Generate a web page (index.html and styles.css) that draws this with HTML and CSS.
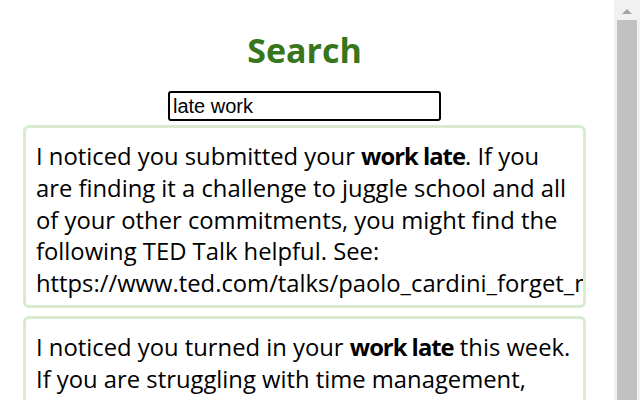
FILE: index.html
```html
<!DOCTYPE html>
<html>
<head>
<meta charset="utf-8">
<link rel="stylesheet" href="styles.css">
</head>
<body>
<div class="page">
  <main class="content">
    <h1 class="title">Search</h1>
    <div class="search-row">
      <input class="search" type="text" value="late work">
    </div>
    <div class="card">
      <p class="card-text">I noticed you submitted your <b>work late</b>. If you are finding it a challenge to juggle school and all of your other commitments, you might find the following TED Talk helpful. See: <span class="nowrap">https://www.ted.com/talks/paolo_cardini_forget_multitasking_try_monotasking</span></p>
    </div>
    <div class="card">
      <p class="card-text">I noticed you turned in your <b>work late</b> this week. If you are struggling with time management, consider using a planner to organize your assignments and deadlines.</p>
    </div>
  </main>
  <div class="scrollbar">
    <div class="scroll-arrow"></div>
    <div class="scroll-thumb"></div>
  </div>
</div>
</body>
</html>
```
FILE: styles.css
```css
html, body {
  margin: 0;
  padding: 0;
  height: 100%;
  overflow: hidden;
  background: #ffffff;
}
.page {
  display: flex;
  height: 400px;
  font-family: "Open Sans", "Noto Sans", sans-serif;
}
.content {
  flex: 1;
  min-width: 0;
  padding: 0 28px 0 23px;
  overflow: hidden;
}
.title {
  margin: 29px 0 0;
  text-align: center;
  color: #38761d;
  font-size: 34px;
  line-height: 42px;
  font-weight: 700;
}
.search-row {
  display: flex;
  justify-content: center;
  margin-top: 20px;
}
.search {
  width: 263px;
  height: 26px;
  box-sizing: content-box;
  border: 2px solid #000;
  border-radius: 3px;
  padding: 0 3px;
  margin: 0;
  font-family: "Liberation Sans", Arial, sans-serif;
  font-size: 20px;
  color: #000;
  outline: none;
}
.card {
  margin-top: 4px;
  border: 3px solid #d9ead3;
  border-radius: 6px;
  overflow: hidden;
  padding: 13px 12px 5px 10px;
}
.card + .card {
  margin-top: 8px;
}
.card-text {
  margin: 0;
  font-size: 23.8px;
  line-height: 31.75px;
  color: #000;
}
.card-text b {
  font-weight: 700;
  letter-spacing: -1px;
}
.nowrap {
  white-space: nowrap;
}
.scrollbar {
  width: 26px;
  flex: none;
  background: #f1f1f1;
  display: flex;
  flex-direction: column;
  align-items: center;
  padding: 0 3px;
  box-sizing: border-box;
}
.scroll-arrow {
  width: 0;
  height: 0;
  margin: 9px 0 6px;
  border-left: 5px solid transparent;
  border-right: 5px solid transparent;
  border-bottom: 5px solid #a3a3a3;
}
.scroll-thumb {
  flex: 1;
  align-self: stretch;
  background: #c1c1c1;
}
```
